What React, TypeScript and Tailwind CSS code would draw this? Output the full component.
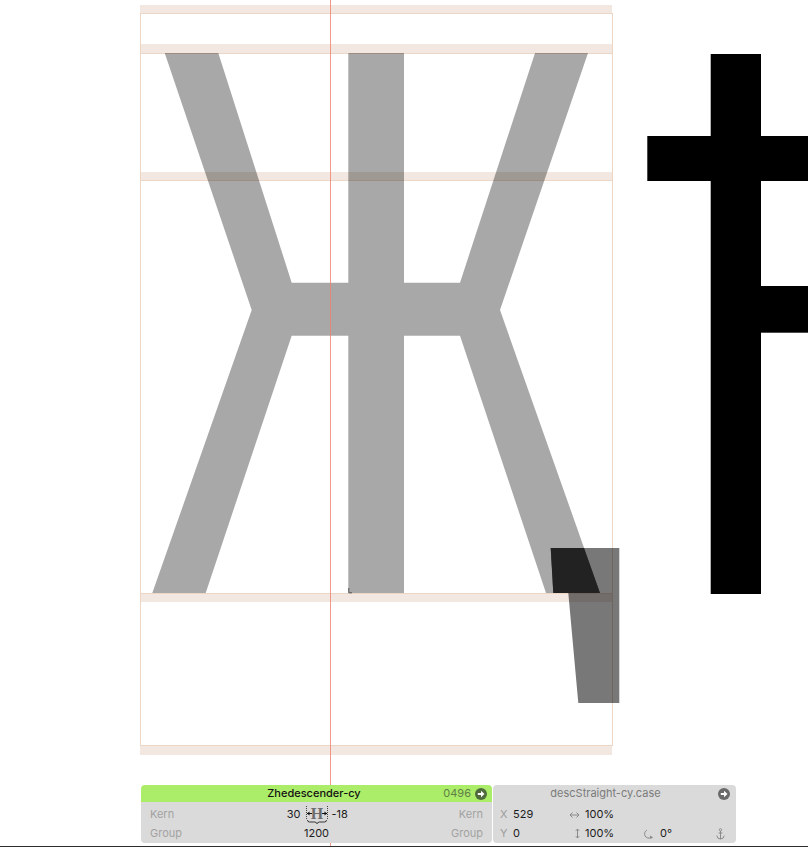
import * as React from "react";

// metric zones of the edit view: [top, height]
const zones: Array<[number, number]> = [
  [5, 8],
  [44, 9],
  [172, 9],
  [593, 9],
  [745, 10],
];

const metricLines = [13.5, 53.5, 180.5, 593.5, 745.5];

const zhe =
  "M164.7,53 L218.3,53 L291.7,282.7 L348.3,282.7 L348.3,53 L404,53 L404,282.7 L460,282.7 L535,53 L588,53 L500,310 L600,593 L546,593 L460,335.7 L404,335.7 L404,593 L348.3,593 L348.3,335.7 L291.7,335.7 L205.7,593 L152.3,593 L251.7,310 Z";

const descender = "M550.7,548 L619.3,548 L619.3,703 L578.3,703 L568.3,593 L553.3,593 Z";
const overlap = "M550.7,548 L584,548 L600,593 L553.3,593 Z";

function GlyphCanvas(): React.ReactElement {
  return (
    <svg className="absolute inset-0" width={808} height={846} viewBox="0 0 808 846">
      {zones.map(([y, h]) => (
        <rect key={y} x={140} y={y} width={472} height={h} fill="#f2e8e1" />
      ))}
      {metricLines.map((y) => (
        <line key={y} x1={140} x2={612} y1={y} y2={y} stroke="#ecd6c6" strokeWidth={1} />
      ))}
      <line x1={140.5} x2={140.5} y1={13} y2={746} stroke="#ecd6c6" />
      <line x1={612.5} x2={612.5} y1={13} y2={746} stroke="#ecd6c6" />

      <path d={zhe} fill="#000" fillOpacity={0.34} />
      <path d="M348.8,588 V592.8 H352" fill="none" stroke="#555" strokeWidth={1} />
      <path d={descender} fill="#000" fillOpacity={0.53} />
      <path d={overlap} fill="#222" />

      {/* next glyph in the line */}
      <rect x={710.7} y={54} width={50.3} height={540} fill="#000" />
      <rect x={647.3} y={136} width={161} height={45} fill="#000" />
      <rect x={761} y={286} width={47} height={46.7} fill="#000" />

      <line x1={330.5} x2={330.5} y1={0} y2={846} stroke="#ef7f6a" strokeOpacity={0.8} />
    </svg>
  );
}

function CircleArrow({ color }: { color: string }): React.ReactElement {
  return (
    <svg width={12} height={12} viewBox="0 0 12 12" className="shrink-0">
      <circle cx={6} cy={6} r={6} fill={color} />
      <path d="M2.8,5.1 H6 V2.8 L9.5,6 L6,9.2 V6.9 H2.8 Z" fill="#fff" />
    </svg>
  );
}

function KernIcon(): React.ReactElement {
  return (
    <svg width={22} height={18} viewBox="0 0 22 18" className="shrink-0">
      <line x1={0.5} x2={0.5} y1={0} y2={14} stroke="#444" strokeDasharray="1 1" />
      <line x1={21.5} x2={21.5} y1={0} y2={14} stroke="#444" strokeDasharray="1 1" />
      <text
        x={11}
        y={13}
        textAnchor="middle"
        fontFamily="'Liberation Serif', serif"
        fontWeight={700}
        fontSize={16}
        fill="#6b6b6b"
      >
        H
      </text>
      <path d="M1,7.5 H6" stroke="#111" strokeWidth={1} />
      <path d="M1,7.5 L3.5,5.5 V9.5 Z" fill="#111" />
      <path d="M16,7.5 H21" stroke="#111" strokeWidth={1} />
      <path d="M21,7.5 L18.5,5.5 V9.5 Z" fill="#111" />
      <path
        d="M1.5,14 Q1.5,16 3.5,16 H8.5 Q10.5,16 11,17.8 Q11.5,16 13.5,16 H18.5 Q20.5,16 20.5,14"
        fill="none"
        stroke="#222"
        strokeWidth={0.9}
      />
    </svg>
  );
}

function HArrow(): React.ReactElement {
  return (
    <svg width={11} height={8} viewBox="0 0 11 8">
      <path d="M1,4 H10 M3.5,1.5 L1,4 L3.5,6.5 M7.5,1.5 L10,4 L7.5,6.5" fill="none" stroke="#8a8a8a" strokeWidth={1} />
    </svg>
  );
}

function VArrow(): React.ReactElement {
  return (
    <svg width={5} height={11} viewBox="0 0 5 11">
      <path d="M2.5,1 V10 M0.8,2.8 L2.5,1 L4.2,2.8 M0.8,8.2 L2.5,10 L4.2,8.2" fill="none" stroke="#8a8a8a" strokeWidth={1} />
    </svg>
  );
}

function RotateIcon(): React.ReactElement {
  return (
    <svg width={11} height={10} viewBox="0 0 11 10">
      <path d="M3.8,1.2 A4.2,4.2 0 0 0 7.8,8.6" fill="none" stroke="#8a8a8a" strokeWidth={1} />
      <path d="M10.2,8.4 L7,6.6 L7.2,10 Z" fill="#8a8a8a" />
    </svg>
  );
}

function AnchorIcon(): React.ReactElement {
  return (
    <svg width={9} height={12} viewBox="0 0 9 12">
      <circle cx={4.5} cy={1.8} r={1.2} fill="none" stroke="#8a8a8a" strokeWidth={0.9} />
      <path d="M4.5,3 V11 M2.6,5 H6.4 M0.8,7.6 Q1.2,11 4.5,11 Q7.8,11 8.2,7.6" fill="none" stroke="#8a8a8a" strokeWidth={1} />
    </svg>
  );
}

function GlyphPanel(): React.ReactElement {
  return (
    <div className="w-[351px] flex flex-col">
      <div className="h-[17px] bg-[#abec69] rounded-t-[4px] grid grid-cols-[1fr_auto_1fr] items-center pr-[5px]">
        <div />
        <div className="text-[11px] font-medium text-[#111]">Zhedescender-cy</div>
        <div className="flex items-center justify-end gap-[4px]">
          <span className="text-[11px] text-[#5f7f45]">0496</span>
          <CircleArrow color="#4f6b3b" />
        </div>
      </div>
      <div className="h-[41px] bg-[#dadada] rounded-b-[4px] px-[9px] pt-[3px] text-[11px]">
        <div className="h-[19px] grid grid-cols-[1fr_auto_1fr] items-center">
          <div className="flex justify-between items-center pr-[5px]">
            <span className="text-[#a2a2a2]">Kern</span>
            <span className="text-[#1c1c1c]">30</span>
          </div>
          <KernIcon />
          <div className="flex justify-between items-center pl-[4px]">
            <span className="text-[#1c1c1c]">-18</span>
            <span className="text-[#a2a2a2]">Kern</span>
          </div>
        </div>
        <div className="h-[19px] grid grid-cols-[1fr_auto_1fr] items-center">
          <span className="text-[#a2a2a2]">Group</span>
          <span className="text-[#1c1c1c]">1200</span>
          <span className="text-[#a2a2a2] text-right">Group</span>
        </div>
      </div>
    </div>
  );
}

function ComponentPanel(): React.ReactElement {
  return (
    <div className="w-[243px] flex flex-col">
      <div className="h-[17px] bg-[#dadada] rounded-t-[4px] flex items-center pr-[6px]">
        <span className="flex-1 text-center text-[11px] text-[#7a7a7a]">descStraight-cy.case</span>
        <CircleArrow color="#6a6a6a" />
      </div>
      <div className="h-[41px] bg-[#dadada] rounded-b-[4px] pl-[7px] pr-[11px] pt-[3px] text-[11px] text-[#1c1c1c]">
        <div className="h-[19px] flex items-center">
          <span className="w-[13px] text-[#9c9c9c]">X</span>
          <span className="w-[52px]">529</span>
          <span className="w-[15px] flex justify-end">
            <HArrow />
          </span>
          <span className="ml-[5px]">100%</span>
        </div>
        <div className="h-[19px] flex items-center">
          <span className="w-[13px] text-[#9c9c9c]">Y</span>
          <span className="w-[52px]">0</span>
          <span className="w-[15px] flex justify-end">
            <VArrow />
          </span>
          <span className="ml-[5px] w-[53px]">100%</span>
          <span className="ml-[5px] w-[17px]">
            <RotateIcon />
          </span>
          <span>0°</span>
          <span className="ml-auto">
            <AnchorIcon />
          </span>
        </div>
      </div>
    </div>
  );
}

export default function App(): React.ReactElement {
  return (
    <div className="w-[808px] h-[868px] bg-white overflow-hidden font-['Inter',sans-serif]">
      <div className="relative h-[847px] border-b border-[#2e2e2e] flex flex-col justify-end pb-[3px] pl-[141px]">
        <GlyphCanvas />
        <div className="relative flex gap-px">
          <GlyphPanel />
          <ComponentPanel />
        </div>
      </div>
    </div>
  );
}
